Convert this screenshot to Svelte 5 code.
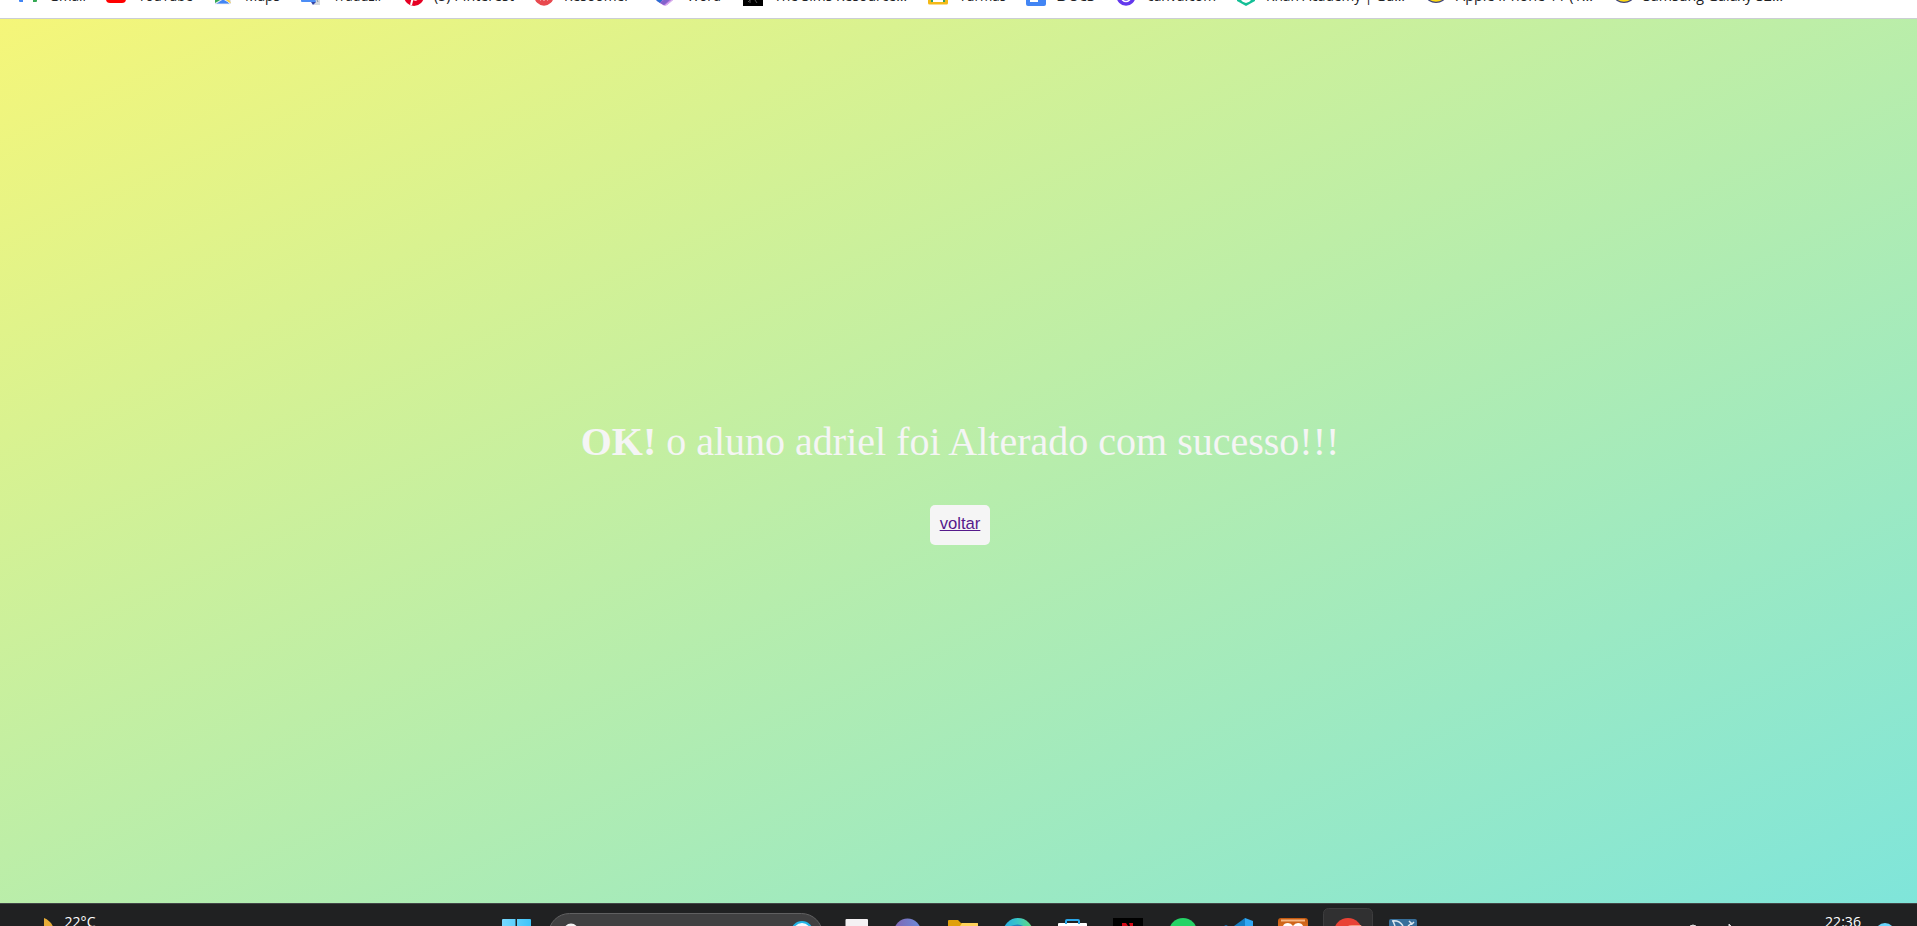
<script>
  const bookmarks = [
    { icon: 'gmail', label: 'Gmail', x: 18, text: 49, end: 86 },
    { icon: 'youtube', label: 'YouTube', x: 106, text: 138, end: 193 },
    { icon: 'maps', label: 'Maps', x: 213, text: 245, end: 280 },
    { icon: 'translate', label: 'Traduzir', x: 301, text: 333, end: 383 },
    { icon: 'pinterest', label: '(5) Pinterest', x: 404, text: 434, end: 514 },
    { icon: 'resoomer', label: 'Resoomer', x: 534, text: 564, end: 630 },
    { icon: 'word', label: 'Word', x: 655, text: 687, end: 721 },
    { icon: 'sims', label: 'The Sims Resource…', x: 743, text: 774, end: 907 },
    { icon: 'classroom', label: 'Turmas', x: 928, text: 959, end: 1006 },
    { icon: 'docs', label: 'Docs', x: 1026, text: 1056, end: 1095 },
    { icon: 'canva', label: 'canva.com', x: 1116, text: 1147, end: 1216 },
    { icon: 'khan', label: 'Khan Academy | Gu…', x: 1236, text: 1266, end: 1405 },
    { icon: 'market', label: 'Apple iPhone 11 (1…', x: 1426, text: 1456, end: 1593 },
    { icon: 'market', label: 'Samsung Galaxy S2…', x: 1614, text: 1643, end: 1783 }
  ].map((b, i, all) => ({ ...b, gap: b.x - (i ? all[i - 1].end : 0) }));
</script>

<div class="screen">
  <nav class="bookmarks">
    {#each bookmarks as b}
      <span class="bookmark" style="margin-left: {b.gap}px; width: {b.end - b.x}px">
        <svg class="favicon" width="20" height="20" viewBox="0 0 20 20">
          {#if b.icon === 'gmail'}
            <path d="M1 4h4v12H2q-1 0-1-1z" fill="#4285f4" /><path d="M15 4h4v11q0 1-1 1h-3z" fill="#34a853" /><path d="M1 4l9 6 9-6v3l-9 6-9-6z" fill="#ea4335" />
          {:else if b.icon === 'youtube'}
            <rect y="3" width="20" height="14" rx="4" fill="#f00" /><path d="M8 7v6l5-3z" fill="#fff" />
          {:else if b.icon === 'maps'}
            <path d="M2 1h16v17H2z" fill="#dfe3e8" /><path d="M2 10l7 3-7 4z" fill="#34a853" /><path d="M14 10l4 7-3-1-5-4z" fill="#fbcd42" /><path d="M2.500 18q1-1 7.500-5 6 3 7 5z" fill="#4285f4" stroke="#eef0f2" stroke-width=".8" />
          {:else if b.icon === 'translate'}
            <path d="M8 6h11v13h-6z" fill="#d7dade" /><path d="M0 1h11l4 15H1q-1 0-1-1z" fill="#4c8df5" /><path d="M10 16h5l-3 3z" fill="#3547a8" /><path d="M15 12l2 4" stroke="#8493a5" />
          {:else if b.icon === 'pinterest'}
            <circle cx="10" cy="10" r="10" fill="#e60023" /><path d="M7 19l3-12M9 13q4 2 5-2" fill="none" stroke="#fff" stroke-width="2" />
          {:else if b.icon === 'resoomer'}
            <circle cx="10" cy="10" r="9.700" fill="#e8494f" /><path d="M6 15l2-2 2 2 2-2 2 2" fill="none" stroke="#fff" opacity=".4" />
          {:else if b.icon === 'word'}
            <path d="M1 7l9-6 9 6v5q0 1-1 2l-6 5q-2 1-4 0l-6-4q-1-1-1-2z" fill="#ba76df" /><path d="M1 7l9-5v9l-5 6-3-2q-1-1-1-2z" fill="#286ed2" /><path d="M5 17l11-9 2 2v1l-9 8z" fill="#8263cc" /><path d="M10 19l9-7q0 1-1 2l-6 5z" fill="#d9b5ee" />
          {:else if b.icon === 'sims'}
            <path d="M0 0h20v20H0z" fill="#000" /><path d="M5 16l2-2v3M12 14l2 3" fill="none" stroke="#555" />
          {:else if b.icon === 'classroom'}
            <rect y="1" width="20" height="17.500" rx="1.500" fill="#f4b916" /><path d="M3 3h14v13H3z" fill="#36a062" /><path d="M5 11h10v5H5z" fill="#fff" />
          {:else if b.icon === 'docs'}
            <rect width="20" height="20" rx="2" fill="#4285f4" /><path d="M4 4h12v5H4zM4 12h8v4H4z" fill="#fff" />
          {:else if b.icon === 'canva'}
            <circle cx="10" cy="10.300" r="9.500" fill="#6338ed" /><circle cx="10" cy="11" r="4.500" fill="none" stroke="#fff" stroke-width="1.600" />
          {:else if b.icon === 'khan'}
            <path d="M10 0l9 5v10l-9 5-9-5V5z" fill="#14bf96" /><path d="M5 12q5 0 5 3 0-3 5-3v2q-1 2-5 3-4-1-5-3z" fill="#fff" />
          {:else}
            <ellipse cx="10" cy="10" rx="9.300" ry="6.400" fill="#ffdb15" stroke="#3c427b" stroke-width="1.300" />
          {/if}
        </svg>
        <svg class="label" width={b.end - b.text} height="20">
          <text x="0" y="15" textLength={b.end - b.text} lengthAdjust="spacingAndGlyphs">{b.label}</text>
        </svg>
      </span>
    {/each}
  </nav>

  <main>
    <p><b>OK!</b> o aluno adriel foi Alterado com sucesso!!!</p>
    <a href="#voltar">voltar</a>
  </main>

  <footer>
    <svg width="1917" height="23" viewBox="0 903 1917 23">
      <defs>
        <linearGradient id="win"><stop stop-color="#79d9ff" /><stop offset="1" stop-color="#3fc5fa" /></linearGradient>
        <linearGradient id="edge"><stop stop-color="#24a9e5" /><stop offset=".5" stop-color="#39c7c6" /><stop offset="1" stop-color="#68dc78" /></linearGradient>
        <linearGradient id="chat"><stop stop-color="#8065b2" /><stop offset="1" stop-color="#6c8ddb" /></linearGradient>
        <linearGradient id="store" x2="0" y2="1"><stop stop-color="#c45a10" /><stop offset="1" stop-color="#f08131" /></linearGradient>
      </defs>
      <path d="M44 918c5 2 9 6 10 12H44z" fill="#e7ad38" />
      <text x="64.500" y="927" textLength="31" lengthAdjust="spacingAndGlyphs">22°C</text>

      <path d="M502 920q0-1 1-1h12.500v12H502zM517 919h13q1 0 1 1v11h-14z" fill="url(#win)" />
      <rect x="548.500" y="913.500" width="274" height="42" rx="21" fill="#404041" stroke="#606061" />
      <circle cx="571" cy="931" r="6" fill="#404041" stroke="#f4f4f4" stroke-width="3" />
      <circle cx="802" cy="932" r="10" fill="#f4fbff" stroke="#22b5e8" stroke-width="2" />

      <rect x="845.500" y="919" width="22.500" height="18" rx="1" fill="#f4f1f3" />
      <circle cx="907.500" cy="932" r="13.500" fill="url(#chat)" />
      <path d="M948 926v-5q0-1 1-1h9l3 3h17v6h-30z" fill="#e0a00b" /><path d="M960 926l2-3h15q1 0 1 1v4h-18z" fill="#ffd25b" />
      <circle cx="1018" cy="933" r="15" fill="url(#edge)" /><path d="M1011 927q7-3 12 0" fill="none" stroke="#2680bf" stroke-width="2" />
      <rect x="1058" y="923" width="29" height="10" rx="1" fill="#fff" /><path d="M1066 924v-3q0-1 1-1h11q1 0 1 1v3" fill="none" stroke="#29a6e9" stroke-width="2" />
      <path d="M1113 918h30v10h-30z" fill="#000" /><path d="M1122 923h4l2 3h-6zM1129 923h4v3h-3z" fill="#d40916" />
      <circle cx="1183" cy="932" r="14" fill="#25d366" />
      <path d="M1234 926l11-8v8z" fill="#167fc4" /><path d="M1245 918l8 3v5h-8z" fill="#30a7f4" /><path d="M1224 926l2-1 2 1z" fill="#1477bb" />
      <rect x="1278" y="918" width="30" height="18" rx="3" fill="url(#store)" /><path d="M1281 920.500h24" stroke="#f6b681" stroke-width="2" /><path d="M1283 926q1-3 5-3 3 0 5 3 2-3 5-3 4 0 5 3z" fill="#fff" />
      <rect x="1323.500" y="908.500" width="49" height="44" rx="5" fill="#303031" stroke="#3d3d3e" />
      <circle cx="1348" cy="932" r="14" fill="#e94235" /><path d="M1348 926q1-1 4-1h9l1 2h-14z" fill="#f49b80" />
      <rect x="1389" y="919" width="28" height="17" rx="2" fill="#376f9b" /><path d="M1392 921q7-1 11 5M1393 921l2 5M1409 921l3 3 2-2M1408 926l4-3" fill="none" stroke="#dbe6ee" stroke-width="1.500" />

      <path d="M1690 926q3-2 6 0M1729 924l2 2h-2z" fill="#ddd" stroke="#ddd" />
      <text x="1825" y="927" textLength="36" lengthAdjust="spacingAndGlyphs">22:36</text>
      <circle cx="1885" cy="933" r="10" fill="#68d4fb" />
    </svg>
  </footer>
</div>

<style>
  :global(body) { margin: 0; overflow: hidden; }
  .screen { width: 1917px; height: 926px; display: flex; flex-direction: column; overflow: hidden; }
  .bookmarks { box-sizing: border-box; height: 19px; flex: none; display: flex; align-items: flex-end; padding-bottom: 12px; border-bottom: 1px solid #cbced3; background: #fff; overflow: hidden; }
  .bookmark { display: flex; flex: none; justify-content: space-between; height: 20px; }
  .favicon { flex: none; }
  .label { flex: none; overflow: visible; font: 15px "Open Sans", "Noto Sans", sans-serif; fill: #202124; }
  main { flex: 1; min-height: 0; display: flex; flex-direction: column; align-items: center; background: linear-gradient(to bottom right, #f5f679, #7fe5da); }
  p { margin: 400px 0 0; padding-left: 3px; font: 40px/46px "Liberation Serif", serif; color: whitesmoke; white-space: nowrap; }
  a { box-sizing: border-box; width: 60px; height: 40px; margin: 40px 0 0 3px; padding: 9px 0 11px; text-align: center; border-radius: 5px; background: whitesmoke; color: #551a8b; font: 16.667px/20px "Liberation Sans", sans-serif; text-decoration: underline; }
  footer { height: 23px; flex: none; background: #202122; box-shadow: inset 0 1px #424647; overflow: hidden; }
  footer svg { display: block; }
  footer text { font: 15px "Open Sans", "Noto Sans", sans-serif; fill: #fff; }
</style>
